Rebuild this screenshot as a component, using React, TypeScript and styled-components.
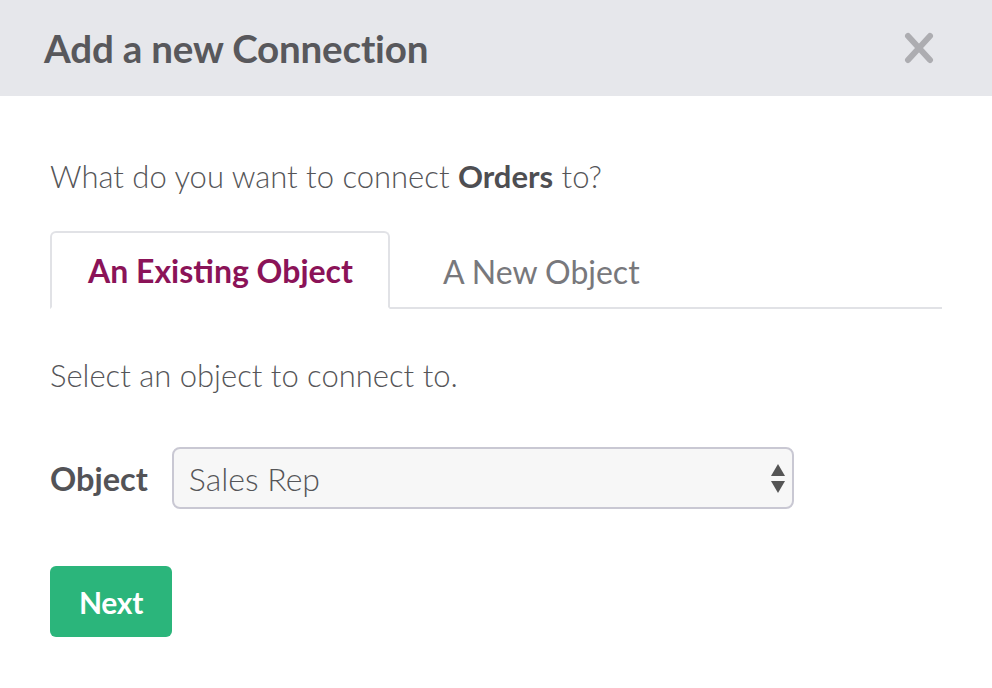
import React, { useState } from 'react'
import styled, { createGlobalStyle } from 'styled-components'

const GlobalStyle = createGlobalStyle`
  html, body {
    margin: 0;
    padding: 0;
    background: #ffffff;
    font-family: Lato, 'Open Sans', sans-serif;
  }
`

const Modal = styled.div`
  width: 992px;
  height: 688px;
  background: #fff;
  display: flex;
  flex-direction: column;
`

const Header = styled.div`
  height: 96px;
  background: #e6e7eb;
  display: flex;
  align-items: center;
  justify-content: space-between;
  padding: 0 58px 0 44px;
  box-sizing: border-box;
`

const Title = styled.h1`
  margin: 0;
  font-size: 38.6px;
  font-weight: 700;
  color: #58585c;
  letter-spacing: -0.2px;
`

const CloseButton = styled.button`
  border: none;
  background: none;
  padding: 0;
  cursor: pointer;
  display: flex;
`

const Body = styled.div`
  padding: 0 50px;
  display: flex;
  flex-direction: column;
`

const Prompt = styled.p`
  margin: 60px 0 0;
  font-size: 31px;
  line-height: 40px;
  color: #555558;
  font-weight: 300;

  strong {
    font-weight: 700;
    color: #4e4e52;
  }
`

const Tabs = styled.div`
  display: flex;
  margin-top: 35px;
  border-bottom: 2px solid #e1e2e6;
`

const Tab = styled.div<{ $active?: boolean }>`
  height: 78px;
  box-sizing: border-box;
  padding: 0 ${(p) => (p.$active ? '35px 0 36px' : '0 0 51px')};
  display: flex;
  align-items: center;
  font-size: 32px;
  cursor: pointer;
  margin-bottom: -2px;
  border-radius: 6px 6px 0 0;
  font-weight: ${(p) => (p.$active ? 700 : 400)};
  color: ${(p) => (p.$active ? '#8b1358' : '#78787c')};
  border: 2px solid ${(p) => (p.$active ? '#e1e2e6' : 'transparent')};
  border-bottom: ${(p) => (p.$active ? '2px solid #fff' : 'none')};
  background: ${(p) => (p.$active ? '#fff' : 'transparent')};
`

const Hint = styled.p`
  margin: 46px 0 0;
  font-size: 31px;
  line-height: 40px;
  color: #555558;
  font-weight: 300;
`

const FieldRow = styled.div`
  display: flex;
  align-items: center;
  margin-top: 52px;
  gap: 24px;
`

const Label = styled.label`
  font-size: 32.5px;
  font-weight: 700;
  color: #535357;
`

const SelectBox = styled.div`
  width: 622px;
  height: 62px;
  box-sizing: border-box;
  border: 2px solid #c9c8d3;
  border-radius: 8px;
  background: #f7f7f7;
  display: flex;
  align-items: center;
  justify-content: space-between;
  padding: 0 7px 0 15px;
  font-size: 32px;
  color: #555558;
  font-weight: 300;
`

const NextButton = styled.button`
  margin-top: 57px;
  width: 122px;
  height: 71px;
  border: none;
  border-radius: 6px;
  background: #2bb57b;
  color: #fff;
  font-family: inherit;
  font-size: 30px;
  font-weight: 700;
  cursor: pointer;
  letter-spacing: -0.3px;
`

export default function App() {
  const [tab, setTab] = useState(0)
  return (
    <>
      <GlobalStyle />
      <Modal>
        <Header>
          <Title>Add a new Connection</Title>
          <CloseButton aria-label='Close'>
            <svg width='30' height='32' viewBox='0 0 30 32'>
              <path
                d='M4 4 L26 28 M26 4 L4 28'
                stroke='#adadb1'
                strokeWidth='6'
                strokeLinecap='round'
              />
            </svg>
          </CloseButton>
        </Header>
        <Body>
          <Prompt>
            What do you want to connect <strong>Orders</strong> to?
          </Prompt>
          <Tabs>
            <Tab $active={tab === 0} onClick={() => setTab(0)}>
              An Existing Object
            </Tab>
            <Tab $active={tab === 1} onClick={() => setTab(1)}>
              A New Object
            </Tab>
          </Tabs>
          <Hint>Select an object to connect to.</Hint>
          <FieldRow>
            <Label>Object</Label>
            <SelectBox>
              <span>Sales Rep</span>
              <svg width='14' height='32' viewBox='0 0 14 32'>
                <path d='M7 2 L14 14 L0 14 Z' fill='#555' />
                <path d='M7 31 L14 19 L0 19 Z' fill='#555' />
              </svg>
            </SelectBox>
          </FieldRow>
          <div>
            <NextButton>Next</NextButton>
          </div>
        </Body>
      </Modal>
    </>
  )
}
